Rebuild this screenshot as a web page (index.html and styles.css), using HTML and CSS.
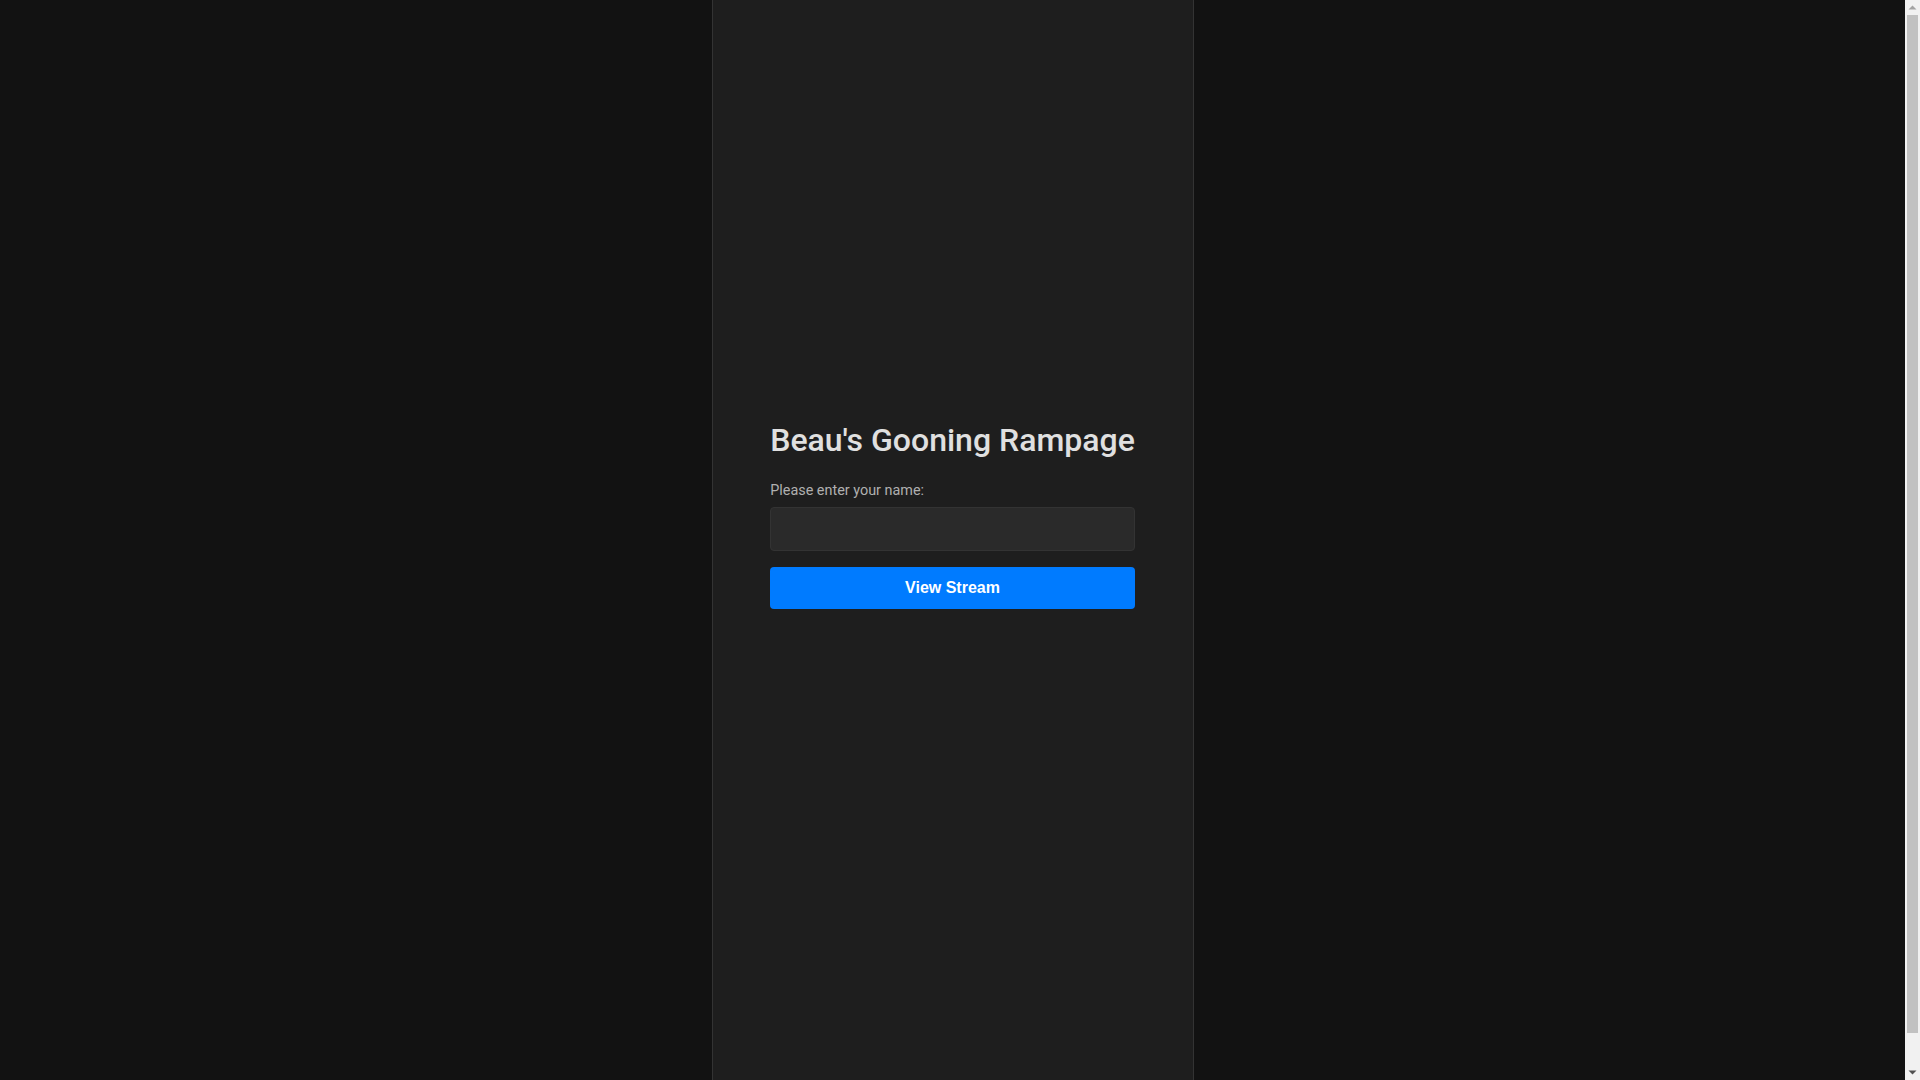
FILE: index.html
```html
<!DOCTYPE html>
<html lang="en">
<head>
<meta charset="utf-8">
<title>Beau's Gooning Rampage</title>
<link rel="stylesheet" href="styles.css">
</head>
<body>
<div class="page">
  <main class="panel">
    <form class="join-form" onsubmit="return false;">
      <h1 class="title">Beau's Gooning Rampage</h1>
      <label class="label" for="name">Please enter your name:</label>
      <input class="name-input" id="name" type="text">
      <button class="view-btn" type="submit">View Stream</button>
    </form>
  </main>
</div>
<div class="scrollbar" aria-hidden="true">
  <svg class="sb-arrow" width="15" height="15" viewBox="0 0 15 15"><path d="M3.5 9.5 L7.5 5.5 L11.5 9.5 Z" fill="#a3a3a3"/></svg>
  <div class="sb-track"><div class="sb-thumb"></div></div>
  <svg class="sb-arrow" width="15" height="15" viewBox="0 0 15 15"><path d="M3.5 5.5 L7.5 9.5 L11.5 5.5 Z" fill="#505050"/></svg>
</div>
</body>
</html>
```

FILE: styles.css
```css
html, body {
  margin: 0;
  padding: 0;
  background: #121212;
}

body {
  font-family: Roboto, "Liberation Sans", sans-serif;
  color: #e0e0e0;
}

.page {
  display: flex;
  justify-content: center;
  padding-right: 15px;
}

.panel {
  width: 482px;
  box-sizing: border-box;
  min-height: calc(100vh + 34px);
  background: #1e1e1e;
  border-left: 1px solid #333333;
  border-right: 1px solid #333333;
  display: flex;
  flex-direction: column;
  align-items: center;
  justify-content: center;
  padding-bottom: 84px;
}

.join-form {
  display: flex;
  flex-direction: column;
  margin: 0;
}

.title {
  margin: 0 0 23px 0;
  font-family: Roboto, sans-serif;
  font-size: 32px;
  font-weight: 500;
  color: #e0e0e0;
  white-space: nowrap;
}

.label {
  font-size: 14.4px;
  color: #b0b0b0;
  margin-bottom: 8px;
}

.name-input {
  box-sizing: border-box;
  width: 100%;
  height: 44px;
  padding: 12px;
  background: #2a2a2a;
  border: 1px solid #333333;
  border-radius: 4px;
  color: #e0e0e0;
  font-family: Roboto, sans-serif;
  font-size: 16px;
  outline: none;
  margin: 0 0 16px 0;
}

.view-btn {
  box-sizing: border-box;
  width: 100%;
  height: 42px;
  padding: 0;
  background: #007bff;
  color: #ffffff;
  border: none;
  border-radius: 4px;
  font-family: "Liberation Sans", Arial, sans-serif;
  font-size: 16px;
  font-weight: bold;
  cursor: pointer;
}

.scrollbar {
  position: fixed;
  top: 0;
  right: 0;
  width: 15px;
  height: 100vh;
  background: #f1f1f1;
  display: flex;
  flex-direction: column;
}

.sb-arrow {
  display: block;
  flex: none;
}

.sb-track {
  flex: 1;
  padding: 0 2px 32px 2px;
  display: flex;
  flex-direction: column;
}

.sb-thumb {
  flex: 1;
  background: #c1c1c1;
}
```
